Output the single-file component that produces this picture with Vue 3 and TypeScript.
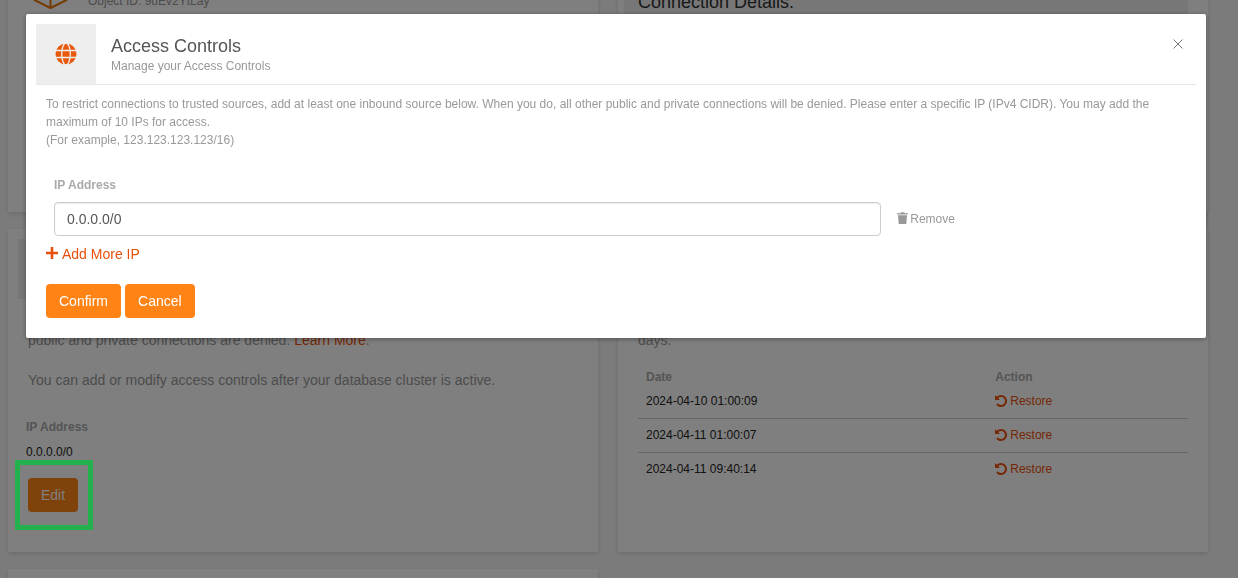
<script setup lang="ts">
import { ref } from 'vue'

const ips = ref<string[]>(['0.0.0.0/0'])
const open = ref(true)
const backups: string[] = ['2024-04-10 01:00:09', '2024-04-11 01:00:07', '2024-04-11 09:40:14']

function removeIp(index: number): void {
  ips.value.splice(index, 1)
}

function addIp(): void {
  if (ips.value.length < 10) ips.value.push('')
}
</script>

<template>
  <div class="app">
    <main class="page">
      <section class="card summary">
        <div class="identity">
          <svg class="cube" viewBox="0 0 36 40" fill="none" stroke="#e8760a" stroke-width="2" stroke-linejoin="round">
            <path d="M18 2 34 10v20L18 38 2 30V10zM2 10l16 9 16-9M18 19v19" />
          </svg>
          <p class="object-id">Object ID: 9uEv2YtLay</p>
        </div>
      </section>
      <section class="card summary">
        <h2 class="connection">Connection Details.</h2>
      </section>

      <section class="card access">
        <div class="icon-box"></div>
        <p class="copy">public and private connections are denied. <a href="#learn">Learn More</a>.</p>
        <p class="copy">You can add or modify access controls after your database cluster is active.</p>
        <dl class="ip-list">
          <dt>IP Address</dt>
          <dd>0.0.0.0/0</dd>
        </dl>
        <div class="edit-wrap">
          <button class="btn" type="button" @click="open = true">Edit</button>
          <span class="highlight"></span>
        </div>
      </section>
      <section class="card backups">
        <div class="icon-box"></div>
        <p class="copy">days.</p>
        <table>
          <thead>
            <tr><th class="date">Date</th><th>Action</th></tr>
          </thead>
          <tbody>
            <tr v-for="date in backups" :key="date">
              <td>{{ date }}</td>
              <td>
                <a class="restore" href="#restore">
                  <svg viewBox="0 128 1536 1536" width="12" height="12" fill="currentColor">
                    <path d="M1536 896q0 156-61 298t-164 245-245 164-298 61q-172 0-327-72.500T177 1387q-7-10-6.500-22.500t8.500-20.500l137-138q10-9 25-9 16 2 23 12 73 95 179 147t225 52q104 0 198.500-40.500T1130 1258t109.500-163.500T1280 896t-40.500-198.500T1130 534 966.500 424.500 768 384q-98 0-188 35.500T420 521l137 138q31 30 14 69-17 40-59 40H64q-26 0-45-19T0 704V256q0-42 40-59 39-17 69 14l130 129q107-101 244.500-156.500T768 128q156 0 298 61t245 164 164 245 61 298z" />
                  </svg>
                  Restore
                </a>
              </td>
            </tr>
          </tbody>
        </table>
      </section>

      <section class="card next"></section>
    </main>

    <div v-if="open" class="backdrop">
      <div class="modal" role="dialog" aria-modal="true" aria-labelledby="dialog-title">
        <header class="modal-head">
          <div class="icon-box globe">
            <svg viewBox="0 0 22 22" width="22" height="22">
              <circle cx="11" cy="11" r="10.5" fill="#e8590c" />
              <g fill="none" stroke="#eee" stroke-width="1.3">
                <ellipse cx="11" cy="11" rx="4.3" ry="11" />
                <path d="M0 7.5h22M0 14.5h22" />
              </g>
            </svg>
          </div>
          <div class="titles">
            <h1 id="dialog-title">Access Controls</h1>
            <p>Manage your Access Controls</p>
          </div>
          <button class="close" type="button" aria-label="Close" @click="open = false">
            <svg viewBox="0 0 10 10" width="10" height="10"><path d="M.5.5l9 9M9.5.5l-9 9" fill="none" stroke="#777" /></svg>
          </button>
        </header>
        <form class="modal-body" @submit.prevent="open = false">
          <p class="help">
            To restrict connections to trusted sources, add at least one inbound source below. When you do, all other public and private connections will be denied. Please enter a specific IP (IPv4 CIDR). You may add the maximum of 10 IPs for access.<br />
            (For example, 123.123.123.123/16)
          </p>
          <div class="fields">
            <label for="ip-0">IP Address</label>
            <div v-for="(_, i) in ips" :key="i" class="field-row">
              <input :id="`ip-${i}`" v-model="ips[i]" type="text" aria-label="IP Address" />
              <button class="remove" type="button" @click="removeIp(i)">
                <svg viewBox="0 0 11 14" width="11" height="14" fill="currentColor">
                  <path d="M0 1.3h3.2L4 .3h3l.8 1H11v1.2H0zM1 3.2h9L9.3 12H1.7z" />
                </svg>
                Remove
              </button>
            </div>
          </div>
          <button class="add" type="button" @click="addIp">
            <svg viewBox="0 0 12 14" width="12" height="14"><path d="M6 0v12M0 6h12" stroke="currentColor" stroke-width="2.6" /></svg>
            Add More IP
          </button>
          <div class="actions">
            <button class="btn" type="submit">Confirm</button>
            <button class="btn" type="button" @click="open = false">Cancel</button>
          </div>
        </form>
      </div>
    </div>
  </div>
</template>

<style>
body {
  margin: 0;
}
</style>

<style scoped>
* {
  box-sizing: border-box;
}
.app {
  height: 100vh;
  overflow: hidden;
  background: #f7f7f7;
  font: 12px/18px "Liberation Sans", Arial, sans-serif;
  color: #999;
}
h1,
h2,
p,
dl,
dd {
  margin: 0;
}
a {
  color: #e8500a;
  text-decoration: none;
}
button,
input {
  font: inherit;
}
button {
  border: 0;
  padding: 0;
  background: none;
  cursor: pointer;
}
/* The page sits scrolled down behind the dialog. */
.page {
  display: grid;
  grid-template-columns: 1fr 1fr;
  gap: 17px 20px;
  margin-top: -60px;
  padding: 0 30px 0 8px;
}
.card {
  background: #fff;
  box-shadow: 0 2px 5px rgba(0, 0, 0, 0.12);
}
.summary {
  min-height: 272px;
  padding: 30px 20px 0 24px;
}
.summary + .summary {
  padding-left: 6px;
}
.identity {
  display: flex;
  align-items: center;
  gap: 19px;
}
.cube {
  width: 37px;
  height: 40px;
}
.object-id {
  padding-top: 22px;
}
.connection {
  padding: 20px 14px;
  background: #eee;
  font-size: 18px;
  line-height: 24px;
  font-weight: 400;
  color: #333;
}
.icon-box {
  flex: none;
  width: 60px;
  height: 60px;
  background: #eee;
}
.access,
.backups {
  min-height: 323px;
  padding: 10px 20px 40px 10px;
}
.next {
  min-height: 200px;
}
.copy {
  margin: 31px 0 0 10px;
  font-size: 14px;
  line-height: 20px;
}
.copy + .copy {
  margin-top: 20px;
}
.ip-list {
  margin: 28px 0 0 8px;
}
dt,
th,
label {
  font-weight: 700;
  color: #aaa;
}
dd {
  margin-top: 7px;
  color: #222;
}
.edit-wrap {
  position: relative;
  width: max-content;
  margin: 17px 0 0 10px;
}
.highlight {
  position: absolute;
  z-index: 20;
  inset: -18px -15px -18px -13px;
  border: 5px solid #22b14c;
  pointer-events: none;
}
.btn {
  height: 34px;
  padding: 0 13px;
  border-radius: 4px;
  background: #ff8415;
  color: #fff;
  font-size: 14px;
  line-height: 20px;
}
table {
  width: calc(100% - 10px);
  margin: 20px 0 0 10px;
  border-collapse: collapse;
  table-layout: fixed;
}
th,
td {
  padding: 0 8px;
  text-align: left;
}
th {
  line-height: 14px;
}
.date {
  width: 63.5%;
}
td {
  height: 34px;
  color: #222;
}
tbody tr + tr {
  border-top: 1px solid #ccc;
}
.restore,
.remove,
.add {
  display: flex;
  align-items: center;
  gap: 3px;
}
.backdrop {
  position: fixed;
  z-index: 10;
  inset: 0;
  padding: 14px 32px 0 26px;
  background: rgba(0, 0, 0, 0.5);
}
.modal {
  padding: 10px 10px 20px;
  border-radius: 2px;
  background: #fff;
  box-shadow: 0 1px 5px rgba(0, 0, 0, 0.35);
}
.modal-head {
  display: flex;
  border-bottom: 1px solid #e7e7e7;
}
.globe {
  display: grid;
  place-items: center;
}
.titles {
  flex: 1;
  padding: 10px 15px 0;
}
h1 {
  font-size: 18px;
  line-height: 24px;
  font-weight: 400;
  color: #555;
}
.titles p {
  line-height: 16px;
}
.close {
  align-self: flex-start;
  display: grid;
  place-items: center;
  width: 20px;
  height: 20px;
  margin: 10px 8px 0 0;
}
.modal-body {
  padding: 10px 10px 0;
}
.fields {
  padding: 27px 8px 0;
}
label {
  display: block;
}
.field-row {
  display: flex;
  align-items: center;
  gap: 16px;
  margin-top: 8px;
}
input {
  width: 73.6%;
  height: 34px;
  padding: 6px 12px;
  border: 1px solid #ccc;
  border-radius: 4px;
  background: #fff;
  box-shadow: inset 0 1px 1px rgba(0, 0, 0, 0.07);
  color: #555;
  font-size: 14px;
  line-height: 20px;
}
.remove {
  gap: 2px;
  color: #999;
}
.add {
  gap: 4px;
  margin-top: 8px;
  color: #e8500a;
  font-size: 14px;
  line-height: 20px;
}
.actions {
  display: flex;
  gap: 4px;
  margin-top: 20px;
}
</style>
